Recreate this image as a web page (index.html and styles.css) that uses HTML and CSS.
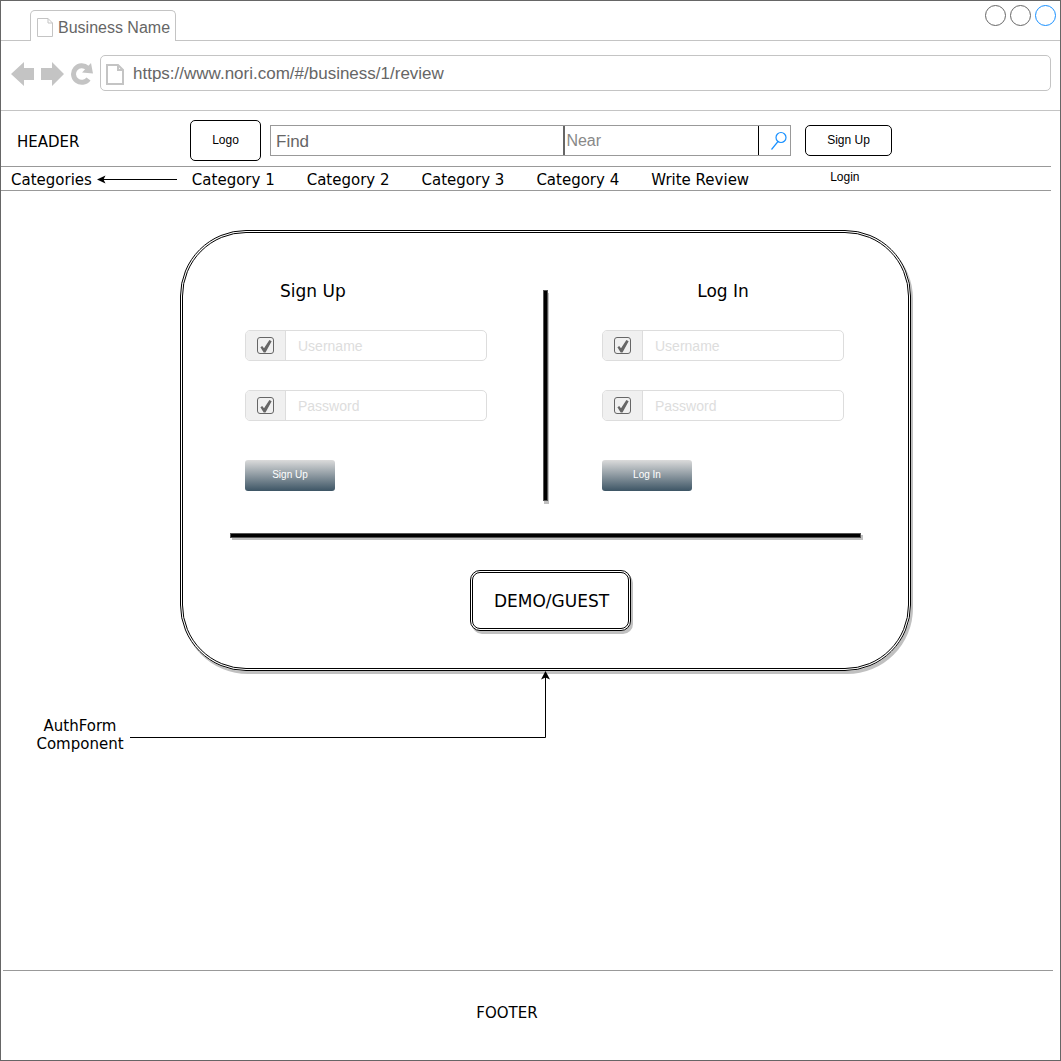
FILE: index.html
```html
<!DOCTYPE html>
<html lang="en">
<head>
<meta charset="utf-8">
<meta name="viewport" content="width=device-width, initial-scale=1">
<title>Business Name</title>
<link rel="stylesheet" href="styles.css">
</head>
<body>
<div class="window">
  <div class="tab-strip">
    <div class="tab">
      <svg class="tab-icon" width="18" height="20" viewBox="0 0 18 20"><path d="M1.500 0.500H12L16.500 5V18.500H1.500ZM12 0.500V5H16.500" fill="none" stroke="#c4c4c4"/></svg>
      <span>Business Name</span>
    </div>
    <div class="window-controls">
      <button class="window-button" aria-label="Minimize"></button>
      <button class="window-button" aria-label="Maximize"></button>
      <button class="window-button window-button-active" aria-label="Close"></button>
    </div>
  </div>

  <div class="toolbar">
    <button class="tool" aria-label="Back"><svg width="23" height="24" viewBox="0 0 23 24"><path d="M0 12L13 0V6H23V18H13V24Z" fill="#c4c4c4"/></svg></button>
    <button class="tool" aria-label="Forward"><svg width="23" height="24" viewBox="0 0 23 24"><path d="M23 12L11 0V6H0V18H11V24Z" fill="#c4c4c4"/></svg></button>
    <button class="tool" aria-label="Reload"><svg width="22" height="24" viewBox="0 0 22 24"><path d="M16.500 6A8.300 8.300 0 1 0 17.500 17" fill="none" stroke="#c4c4c4" stroke-width="5"/><path d="M20 1L22 11.500L11 10.500Z" fill="#c4c4c4"/></svg></button>
    <label class="address">
      <svg width="18" height="21" viewBox="0 0 18 21"><path d="M1 1H12L17 6V20H1ZM12 1V6H17" fill="none" stroke="#c4c4c4" stroke-width="2"/></svg>
      <input class="address-input" type="text" aria-label="Address" value="https://www.nori.com/#/business/1/review">
    </label>
  </div>

  <header class="site-header">
    <span class="header-label">HEADER</span>
    <button class="outline-button logo">Logo</button>
    <form class="search">
      <input class="find" type="text" aria-label="Find" placeholder="Find">
      <input class="near" type="text" aria-label="Near" placeholder="Near">
      <button class="search-button" type="button" aria-label="Search"><svg width="18" height="20" viewBox="0 0 18 20"><circle cx="11" cy="6.500" r="5" fill="none" stroke="#1890ff" stroke-width="1.200"/><path d="M8 10.500L1.500 18.500" stroke="#1890ff" stroke-width="1.200"/></svg></button>
    </form>
    <button class="outline-button sign-up">Sign Up</button>
  </header>

  <nav class="categories">
    <span class="categories-label">Categories</span>
    <svg class="categories-arrow" width="80" height="9" viewBox="0 0 80 9"><path d="M4 4.500H80" stroke="#000"/><path d="M0 4.500L8.500 0.500L6.500 4.500L8.500 8.500Z"/></svg>
    <div class="category-links">
      <a href="#c1">Category 1</a>
      <a href="#c2">Category 2</a>
      <a href="#c3">Category 3</a>
      <a href="#c4">Category 4</a>
      <a href="#review">Write Review</a>
    </div>
    <a class="login-link" href="#login">Login</a>
  </nav>

  <main class="content">
    <section class="auth">
      <div class="auth-forms">
        <form class="auth-form auth-form-signup">
          <h2 class="auth-title">Sign Up</h2>
          <div class="field">
            <span class="addon"><input class="tick" type="checkbox" aria-label="Use username" checked></span>
            <input class="field-input" type="text" aria-label="Username" placeholder="Username">
          </div>
          <div class="field">
            <span class="addon"><input class="tick" type="checkbox" aria-label="Use password" checked></span>
            <input class="field-input" type="password" aria-label="Password" placeholder="Password">
          </div>
          <button class="submit" type="button">Sign Up</button>
        </form>
        <div class="divider"></div>
        <form class="auth-form auth-form-login">
          <h2 class="auth-title">Log In</h2>
          <div class="field">
            <span class="addon"><input class="tick" type="checkbox" aria-label="Use username" checked></span>
            <input class="field-input" type="text" aria-label="Username" placeholder="Username">
          </div>
          <div class="field">
            <span class="addon"><input class="tick" type="checkbox" aria-label="Use password" checked></span>
            <input class="field-input" type="password" aria-label="Password" placeholder="Password">
          </div>
          <button class="submit" type="button">Log In</button>
        </form>
      </div>
      <hr class="rule">
      <button class="demo">DEMO/GUEST</button>
    </section>
    <div class="note">
      <p class="note-text">AuthForm Component</p>
      <svg width="420" height="68" viewBox="0 0 420 68"><path d="M0 66.500H415.500V6" fill="none" stroke="#000"/><path d="M415.500 0L420 8.500L415.500 6.500L411 8.500Z"/></svg>
    </div>
  </main>

  <footer class="site-footer">FOOTER</footer>
</div>
</body>
</html>
```
FILE: styles.css
```css
* {
  box-sizing: border-box;
}

body {
  margin: 0;
  background: #fff;
  color: #000;
  font: 15px/18px Verdana, "DejaVu Sans", sans-serif;
}

button,
input {
  margin: 0;
  padding: 0;
  border: 0;
  background: none;
  color: inherit;
  font: inherit;
}

a {
  color: inherit;
  text-decoration: none;
}

svg {
  display: block;
  flex: none;
}

.window {
  display: flex;
  flex-direction: column;
  min-height: 100vh;
  border: 1px solid #666;
}

/* Browser chrome */
.tab-strip {
  display: flex;
  justify-content: space-between;
  height: 40px;
  padding: 0 4px 0 29px;
  border-bottom: 1px solid #c4c4c4;
}

.tab {
  display: flex;
  align-items: center;
  gap: 4px;
  height: 31px;
  margin-top: 9px;
  padding: 3px 5px 0;
  border: 1px solid #c4c4c4;
  border-bottom: 0;
  border-radius: 5px 5px 0 0;
  background: #fff;
  color: #666;
  font: 16px/20px "Liberation Sans", Arial, sans-serif;
  white-space: nowrap;
}

.window-controls {
  display: flex;
  gap: 4px;
  padding-top: 4px;
}

.window-button {
  width: 21px;
  height: 21px;
  border: 1px solid #666;
  border-radius: 50%;
}

.window-button-active {
  border-color: #1890ff;
}

.toolbar {
  display: flex;
  align-items: center;
  gap: 7px;
  padding: 14px 9px 19px 10px;
  border-bottom: 1px solid #c4c4c4;
}

.tool {
  padding-top: 2px;
}

.address {
  display: flex;
  flex: 1;
  align-items: center;
  gap: 9px;
  height: 36px;
  padding: 2px 5px 0;
  border: 1px solid #c4c4c4;
  border-radius: 5px;
}

.address-input {
  flex: 1;
  min-width: 0;
  color: #666;
  font: 17px/20px "Liberation Sans", Arial, sans-serif;
}

/* Site header */
.site-header {
  display: flex;
  align-items: center;
  margin-right: 9px;
  padding: 9px 159px 5px 16px;
  border-bottom: 1px solid #999;
}

.header-label {
  width: 173px;
  padding-top: 2px;
}

.outline-button {
  border: 1px solid #000;
  border-radius: 5px;
  font: 12px/14px "Liberation Sans", Arial, sans-serif;
}

.logo {
  width: 71px;
  height: 41px;
  padding-bottom: 2px;
}

.search {
  display: flex;
  flex: 1;
  height: 31px;
  margin: 0 14px 0 9px;
  border: 1px solid #999;
  color: #666;
  font: 17px/20px "Liberation Sans", Arial, sans-serif;
}

.find {
  flex: 3;
  min-width: 0;
  padding: 2px 0 0 5px;
}

.near {
  flex: 2;
  min-width: 0;
  padding-left: 1px;
  border-left: 2px solid #666;
  font-size: 16px;
}

.search ::placeholder {
  color: #666;
  opacity: 1;
}

.search .near::placeholder {
  color: #888;
}

.search-button {
  width: 32px;
  padding-left: 11px;
  border-left: 1px solid #000;
}

.sign-up {
  width: 87px;
  height: 31px;
  padding-bottom: 2px;
}

.categories {
  display: flex;
  align-items: center;
  height: 24px;
  margin-right: 9px;
  padding: 2px 0 0 10px;
  border-bottom: 1px solid #999;
}

.categories-arrow {
  margin: 0 15px 0 5px;
}

.category-links {
  display: flex;
  gap: 32px;
  white-space: nowrap;
}

.login-link {
  margin: 0 0 6px 81px;
  font: 12px/14px "Liberation Sans", Arial, sans-serif;
}

/* Auth form */
.content {
  flex: 1;
  padding-top: 39px;
}

.auth {
  max-width: 731px;
  margin-left: 179px;
  padding: 47px 47px 37px;
  border: 3px double #000;
  border-radius: 66px;
  box-shadow: 2px 3px 0 #c0c0c0;
}

.auth-forms {
  display: grid;
  grid-template-columns: 1fr 5px 1fr;
}

.auth-form {
  display: flex;
  flex-direction: column;
}

.auth-form-signup {
  padding: 0 56px 0 15px;
}

.auth-form-login {
  padding: 0 17px 0 54px;
}

.auth-title {
  margin: 0 0 28px;
  font-size: 17px;
  font-weight: 400;
  line-height: 22px;
  text-align: center;
}

.auth-form-signup .auth-title {
  padding-left: 35px;
  text-align: left;
}

.field {
  display: flex;
  height: 31px;
  margin-bottom: 29px;
  overflow: hidden;
  border: 1px solid #ddd;
  border-radius: 5px;
}

.addon {
  display: flex;
  align-items: center;
  justify-content: center;
  width: 40px;
  border-right: 1px solid #ddd;
  background: #f0f0f0;
}

.tick {
  appearance: none;
  width: 17px;
  height: 17px;
  border: 1px solid #666;
  border-radius: 3px;
}

.tick:checked::before {
  content: "";
  display: block;
  width: 15px;
  height: 15px;
  background: #666;
  clip-path: polygon(16% 62%, 28% 54%, 40% 68%, 76% 14%, 91% 22%, 50% 97%, 38% 97%);
}

.field-input {
  flex: 1;
  min-width: 0;
  padding-left: 12px;
  font: 14px/16px "Liberation Sans", Arial, sans-serif;
}

.field-input::placeholder {
  color: #ddd;
  opacity: 1;
}

.submit {
  width: 90px;
  height: 31px;
  margin-top: 10px;
  padding-bottom: 2px;
  border: 1px solid transparent;
  border-radius: 3px;
  background: linear-gradient(#dbdbdb, #3d5565) border-box;
  color: #fff;
  font: 10px/12px "Liberation Sans", Arial, sans-serif;
}

.divider {
  height: 211px;
  margin-top: 10px;
  border: 1px solid #555;
  background: #000;
  box-shadow: 1px 3px 0 #c0c0c0;
}

.rule {
  height: 5px;
  margin: 32px 0;
  border: 1px solid #555;
  background: #000;
  box-shadow: 2px 2px 0 #c0c0c0;
}

.demo {
  display: block;
  width: 161px;
  height: 61px;
  margin-left: 240px;
  padding-left: 2px;
  border: 3px double #000;
  border-radius: 10px;
  background: #fff;
  box-shadow: 2px 3px 0 #c0c0c0;
  font-size: 17px;
}

.note {
  display: flex;
  align-items: flex-start;
  padding-left: 29px;
}

.note-text {
  width: 100px;
  margin: 46px 0 0;
  text-align: center;
}

.site-footer {
  margin: 0 7px 0 2px;
  padding: 33px 42px 38px 0;
  border-top: 1px solid #999;
  text-align: center;
}
```
